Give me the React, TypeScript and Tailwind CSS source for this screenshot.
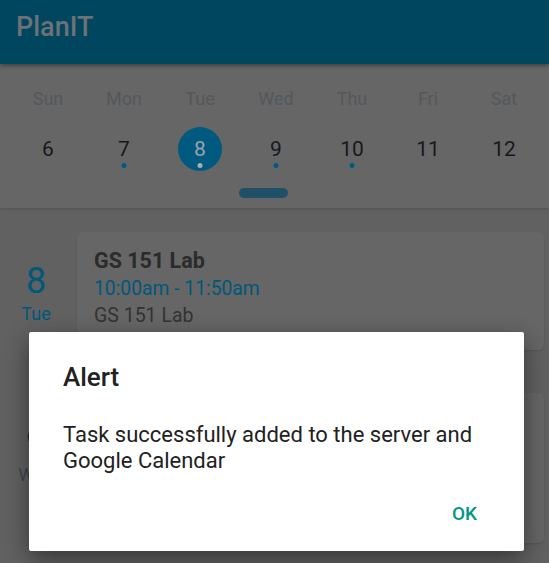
const DAYS = [
  { label: 'Sun', num: 6, dot: false },
  { label: 'Mon', num: 7, dot: true },
  { label: 'Tue', num: 8, dot: true, selected: true },
  { label: 'Wed', num: 9, dot: true },
  { label: 'Thu', num: 10, dot: true },
  { label: 'Fri', num: 11, dot: false },
  { label: 'Sat', num: 12, dot: false },
]

export default function App() {
  return (
    <div className="relative w-[549px] h-[563px] overflow-hidden bg-[#616161] font-['Roboto',sans-serif]">
      {/* Header */}
      <div className="relative z-20 h-16 flex items-center pl-4 pb-[10px] bg-[#00465f] shadow-[0_2px_4px_rgba(0,0,0,0.35)]">
        <span className="text-[27px] font-medium text-[#6e7175] leading-none">PlanIT</span>
      </div>

      {/* Week strip */}
      <div className="relative z-10 h-[144px] bg-[#666666] shadow-[0_1px_3px_rgba(0,0,0,0.15)]">
        <div className="grid grid-cols-7 w-[532px] ml-[10px] pt-[24px]">
          {DAYS.map(d => (
            <div key={d.label} className="flex flex-col items-center">
              <span className="text-[18px] leading-[21px] text-[#54585c]">{d.label}</span>
              <div
                className={`relative mt-[18px] w-11 h-11 rounded-full flex items-center justify-center ${
                  d.selected ? 'bg-[#005a80]' : ''
                }`}
              >
                <span className={`text-[21px] leading-none ${d.selected ? 'text-[#9aa3a9]' : 'text-[#16191c]'}`}>
                  {d.num}
                </span>
                {d.dot && (
                  <span
                    className={`absolute bottom-[3px] left-1/2 -translate-x-1/2 w-[5px] h-[5px] rounded-full ${
                      d.selected ? 'bg-[#a8adb0]' : 'bg-[#005a80]'
                    }`}
                  />
                )}
              </div>
            </div>
          ))}
        </div>
        <div className="ml-[239px] mt-[17px] w-[49px] h-[10px] rounded-full bg-[#1f5068]" />
      </div>

      {/* Agenda */}
      <div className="pt-6">
        <div className="flex">
          <div className="w-[72px] flex flex-col items-center pt-[29px]">
            <span className="text-[36px] leading-[40px] text-[#00587a]">8</span>
            <span className="mt-[2px] text-[18px] leading-[22px] text-[#00587a]">Tue</span>
          </div>
          <div className="ml-[5px] w-[467px] h-[118px] rounded-md bg-[#666666] shadow-[0_1px_2px_rgba(0,0,0,0.12)] pl-[17px] pt-[15px]">
            <div className="text-[21.5px] leading-[28px] font-bold text-[#2b2b2b]">GS 151 Lab</div>
            <div className="text-[19.3px] leading-[28px] text-[#00587a]">10:00am - 11:50am</div>
            <div className="text-[19.5px] leading-[26px] text-[#333333]">GS 151 Lab</div>
          </div>
        </div>

        <div className="flex mt-[43px]">
          <div className="w-[72px] flex flex-col items-center pt-[29px]">
            <span className="text-[36px] leading-[40px] text-[#1f2a3a]">9</span>
            <span className="mt-[2px] text-[18px] leading-[22px] text-[#3d4753]">Wed</span>
          </div>
          <div className="ml-[5px] w-[467px] h-[150px] rounded-md bg-[#666666] shadow-[0_1px_2px_rgba(0,0,0,0.12)]" />
        </div>
      </div>

      {/* Alert dialog */}
      <div className="absolute z-30 left-[29px] top-[332px] w-[495px] h-[219px] bg-white rounded-[2px] shadow-[0_8px_24px_rgba(0,0,0,0.45)] pl-[34px] pr-[24px] pt-[29px]">
        <div className="text-[26px] leading-[32px] font-medium text-[#212121]">Alert</div>
        <p className="mt-[29px] text-[22px] leading-[26px] text-[#212121]">
          Task successfully added to the server and Google Calendar
        </p>
        <div className="flex justify-end pr-[23px] mt-[28px]">
          <span className="text-[19px] leading-[24px] font-medium text-[#009688]">OK</span>
        </div>
      </div>
    </div>
  )
}
